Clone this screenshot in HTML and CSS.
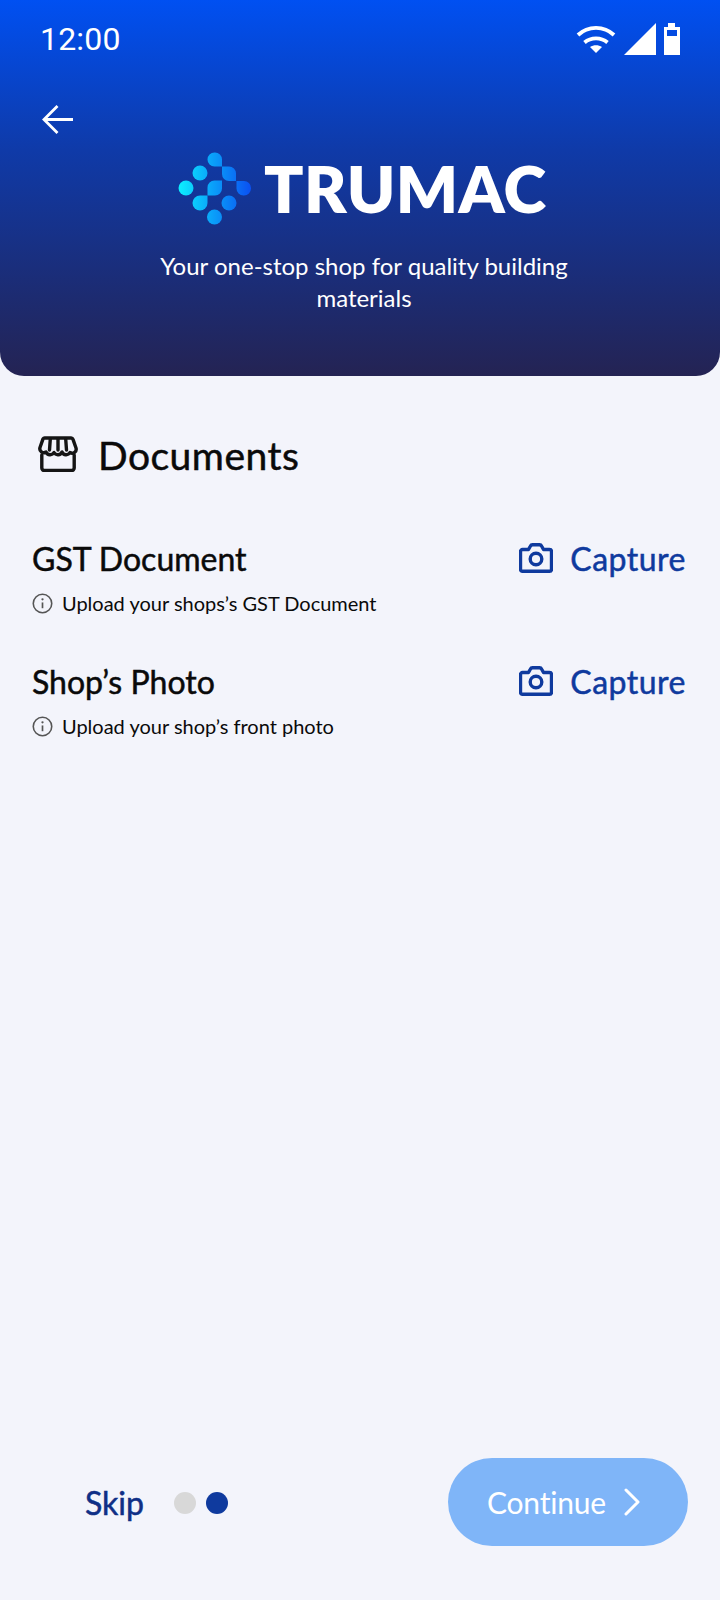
FILE: index.html
```html
<!DOCTYPE html>
<html lang="en">
<head>
<meta charset="utf-8">
<title>Documents</title>
<link rel="stylesheet" href="styles.css">
</head>
<body>
<div class="app">
  <header class="hero">
    <div class="status">
      <span class="time">12:00</span>
      <div class="status-icons">
        <svg class="wifi" viewBox="0 0 40 28"><path d="M2 10C12 .500 28 .500 38 10" fill="none" stroke="#fff" stroke-width="3.800"/><path d="M8.500 17.500c6.500-5.500 16.500-5.500 23 0" fill="none" stroke="#fff" stroke-width="3.800"/><path d="M14 22c3.500-2.400 8.500-2.400 12 0l-6 6z" fill="#fff"/></svg>
        <svg class="signal" viewBox="0 0 32 32"><path d="M32 0v32H0z" fill="#fff"/></svg>
        <svg class="battery" viewBox="0 0 16 32"><path fill-rule="evenodd" d="M4 0h7v4h5v28H0V4h4zM3 7v6h10V7z" fill="#fff"/></svg>
      </div>
    </div>
    <svg class="back" viewBox="0 0 32 32"><path d="M31 15.500H3M15.500 2 2 15.500 15.500 29" fill="none" stroke="#fff" stroke-width="2.800"/></svg>
    <div class="brand">
      <svg class="mark" viewBox="0 0 73 73">
        <defs><linearGradient id="mk" gradientUnits="userSpaceOnUse" x1="0" y1="36" x2="73" y2="36"><stop offset="0" stop-color="#0cf0ff"/><stop offset=".45" stop-color="#0aa4fa"/><stop offset="1" stop-color="#0a50f2"/></linearGradient></defs>
        <g fill="url(#mk)">
          <circle cx="8" cy="36" r="7.500"/>
          <circle cx="22" cy="21" r="7.500"/>
          <circle cx="51" cy="51" r="7.500"/>
          <circle cx="36.500" cy="65" r="7.500"/>
          <path d="M29.500 43.500h-7.500a7.500 7.500 0 1 0 7.500 7.500z"/>
          <path d="M29.500 43.500v-8a7 7 0 0 1 7-7h7.500v8a7 7 0 0 1-7 7z"/>
          <path d="M44 14.500h-7.500a7 7 0 0 1-7-7 7 7 0 0 1 7-7h.500a7 7 0 0 1 7 7v7h7a7 7 0 0 1 7 7v7.500H66a7 7 0 0 1 7 7v.500a7 7 0 0 1-7 7h-.500a7 7 0 0 1-7-7v-7.500H51a7 7 0 0 1-7-7z"/>
        </g>
      </svg>
      <span class="wordmark">TRUMAC</span>
    </div>
    <p class="tagline">Your one-stop shop for quality building materials</p>
  </header>

  <main class="content">
    <h1 class="section-title">
      <svg class="store" viewBox="0 0 40 36"><g fill="none" stroke="#151515" stroke-width="3.400" stroke-linejoin="round" stroke-linecap="round"><path d="M3.800 19v13a2.500 2.500 0 0 0 2.500 2.500h27.400a2.500 2.500 0 0 0 2.500-2.500V19"/><path d="M7 2h26a2 2 0 0 1 2 1.400l3 8.600a4 4 0 0 1-6 4.500 4.500 4.500 0 0 1-8-.5 4.500 4.500 0 0 1-8 .5 4.500 4.500 0 0 1-8 -.5 4 4 0 0 1-6-4.500l3-8.600A2 2 0 0 1 7 2z"/><path d="M12.300 3 11.500 14M20 3v11M27.700 3l.8 11"/></g></svg>
      <span>Documents</span>
    </h1>

    <section class="doc">
      <div class="doc-row">
        <h2 class="doc-name">GST Document</h2>
        <div class="capture">
          <svg class="camera" viewBox="0 0 34 30"><g fill="none" stroke="#0f3a9e" stroke-width="3.400" stroke-linejoin="round"><path d="M3.500 6.500H9.500L11.300 3.200Q12 1.800 13.500 1.800h7Q22 1.800 22.700 3.200L24.500 6.500h6a2 2 0 0 1 2 2v17.800a2 2 0 0 1-2 2h-27a2 2 0 0 1-2-2V8.500a2 2 0 0 1 2-2z"/><circle cx="17" cy="16" r="5.800"/></g></svg>
          <span>Capture</span>
        </div>
      </div>
      <p class="doc-hint">
        <svg class="info" viewBox="0 0 20 20"><circle cx="10" cy="10" r="8.800" fill="none" stroke="#555" stroke-width="1.500"/><path d="M10 9v5.500" stroke="#555" stroke-width="1.600"/><circle cx="10" cy="6" r="1.100" fill="#555"/></svg>
        <span>Upload your shops’s GST Document</span>
      </p>
    </section>

    <section class="doc">
      <div class="doc-row">
        <h2 class="doc-name">Shop’s Photo</h2>
        <div class="capture">
          <svg class="camera" viewBox="0 0 34 30"><g fill="none" stroke="#0f3a9e" stroke-width="3.400" stroke-linejoin="round"><path d="M3.500 6.500H9.500L11.300 3.200Q12 1.800 13.500 1.800h7Q22 1.800 22.700 3.200L24.500 6.500h6a2 2 0 0 1 2 2v17.800a2 2 0 0 1-2 2h-27a2 2 0 0 1-2-2V8.500a2 2 0 0 1 2-2z"/><circle cx="17" cy="16" r="5.800"/></g></svg>
          <span>Capture</span>
        </div>
      </div>
      <p class="doc-hint">
        <svg class="info" viewBox="0 0 20 20"><circle cx="10" cy="10" r="8.800" fill="none" stroke="#555" stroke-width="1.500"/><path d="M10 9v5.500" stroke="#555" stroke-width="1.600"/><circle cx="10" cy="6" r="1.100" fill="#555"/></svg>
        <span>Upload your shop’s front photo</span>
      </p>
    </section>
  </main>

  <footer class="footer">
    <div class="footer-left">
      <span class="skip">Skip</span>
      <div class="dots"><span class="dot"></span><span class="dot dot-on"></span></div>
    </div>
    <button class="continue" type="button">
      <span>Continue</span>
      <svg class="chev" viewBox="0 0 16 28"><path d="M2 2l12 12L2 26" fill="none" stroke="#fff" stroke-width="3" stroke-linecap="round" stroke-linejoin="round"/></svg>
    </button>
  </footer>
</div>
</body>
</html>
```
FILE: styles.css
```css
* { box-sizing: border-box; margin: 0; padding: 0; }
html, body { width: 720px; height: 1600px; overflow: hidden; }
body { font-family: "Lato", "Noto Sans", sans-serif; background: #f3f4fb; color: #0a0a0a; }
.app { display: flex; flex-direction: column; height: 1600px; }

.hero {
  height: 376px;
  background: linear-gradient(180deg, #0050f2 0%, #0f3aa8 40%, #242353 100%);
  border-radius: 0 0 24px 24px;
  color: #fff;
  padding: 15px 41px 0;
  display: flex;
  flex-direction: column;
}
.status { display: flex; justify-content: space-between; align-items: center; height: 48px; }
.time { font-family: "Roboto", sans-serif; font-size: 32px; font-weight: 400; letter-spacing: 0.2px; line-height: 48px; margin-left: -1px; }
.status-icons { display: flex; align-items: center; gap: 8px; margin-right: -1px; }
.wifi { width: 40px; height: 28px; }
.signal { width: 32px; height: 32px; }
.battery { width: 16px; height: 32px; }

.back { width: 32px; height: 32px; margin: 41px 0 0 1px; display: block; }

.brand { display: flex; align-items: center; gap: 13px; margin: 16px 0 0 137px; height: 73px; }
.mark { width: 73px; height: 73px; flex: none; }
.wordmark { font-size: 65px; font-weight: 800; letter-spacing: 0.4px; line-height: 73px; }

.tagline { font-size: 24px; line-height: 32px; text-align: center; width: 440px; margin: 25px 0 0 103px; }

.content { flex: 1; padding: 0 32px; }
.section-title { display: flex; align-items: center; gap: 20px; font-size: 39px; font-weight: 400; letter-spacing: 0.5px; -webkit-text-stroke: 0.5px #0a0a0a; margin: 59px 0 0 6px; height: 40px; line-height: 40px; }
.store { width: 40px; height: 36px; margin-top: -2px; }

.doc { margin-top: 61px; }
.doc + .doc { margin-top: 43px; }
.doc-row { display: flex; justify-content: space-between; align-items: center; height: 44px; }
.doc-name { font-size: 32px; font-weight: 400; -webkit-text-stroke: 0.5px #0a0a0a; }
.capture { display: flex; align-items: center; gap: 17px; margin-right: 2px; color: #0f3a9e; font-size: 32px; letter-spacing: 0.5px; -webkit-text-stroke: 0.5px #0f3a9e; }
.camera { width: 34px; height: 30px; }
.doc-hint { display: flex; align-items: center; gap: 9px; font-size: 20px; margin-top: 10px; height: 26px; }
.info { width: 21px; height: 21px; flex: none; }

.footer { display: flex; justify-content: space-between; align-items: center; padding: 0 32px 54px 85px; }
.footer-left { display: flex; align-items: center; gap: 30px; }
.skip { font-size: 32px; color: #0f2f86; -webkit-text-stroke: 0.5px #0f2f86; }
.dots { display: flex; gap: 10px; margin-top: 2px; }
.dot { width: 22px; height: 22px; border-radius: 50%; background: #d8d8d8; }
.dot-on { background: #0f3a9e; }
.continue {
  width: 240px; height: 88px; border: 0; border-radius: 44px; background: #7fb5f8; color: #fff;
  font: 400 30px "Lato", sans-serif; letter-spacing: -0.2px; display: flex; align-items: center; justify-content: center; gap: 18px; padding-right: 9px;
}
.chev { width: 16px; height: 28px; }
```
